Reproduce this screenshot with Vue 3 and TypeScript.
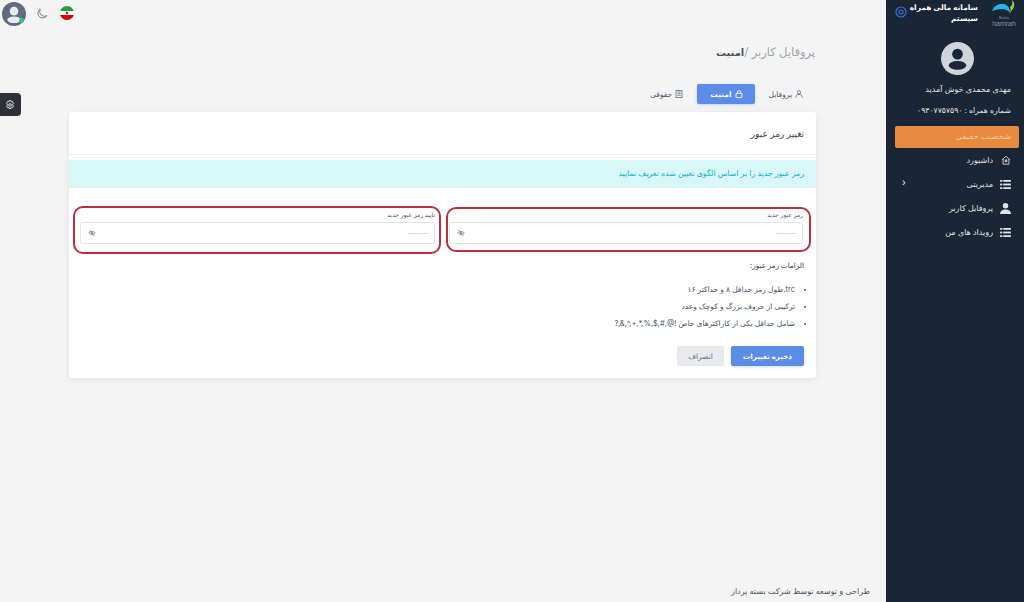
<script setup lang="ts">
const menu = [
  { label: 'داشبورد', icon: 'home' },
  { label: 'مدیریتی', icon: 'list', arrow: true },
  { label: 'پروفایل کاربر', icon: 'user' },
  { label: 'رویداد های من', icon: 'list' },
]
const rules = [
  'trc.طول رمز حداقل ۸ و حداکتر ۱۶',
  'ترکیبی از حروف بزرگ و کوچک وعدد',
  'شامل حداقل یکی از کاراکترهای خاص !@,#,$,%,*,+,^,&,?',
]
const fields = ['رمز عبور جدید', 'تایید رمز عبور جدید']
</script>

<template>
  <div class="page" dir="rtl">
    <aside class="sidebar">
      <div class="brand">
        <svg class="logo" viewBox="0 0 26 28" width="26" height="28">
          <path d="M1 11C3 6 8 3 13 4c4 1 6 4 6 9-2-3-5-4-8-4-4 0-7 1-10 2z" fill="#23b4ea" />
          <path d="M18 14c2-2 2-5 1-7 2-1 3-4 2-7 3 2 3 7 0 10-1 2-2 3-3 4z" fill="#a3c93a" />
          <text x="13" y="19" text-anchor="middle" class="logo-sub">Banka</text>
          <text x="13" y="26" text-anchor="middle" class="logo-text">hamrah</text>
        </svg>
        <div class="brand-name">سامانه مالی همراه<br />سیستم</div>
        <svg class="target" viewBox="0 0 12 12" width="12" height="12">
          <circle cx="6" cy="6" r="5" fill="none" stroke="#3d6fe0" stroke-width="1.2" />
          <circle cx="6" cy="6" r="2" fill="none" stroke="#3d6fe0" stroke-width="1.2" />
        </svg>
      </div>
      <div class="user">
        <svg class="side-avatar" viewBox="0 0 34 34" width="33" height="33">
          <circle cx="17" cy="17" r="17" fill="#ced4da" />
          <circle cx="17" cy="12.500" r="5.500" fill="#1a2535" />
          <ellipse cx="17" cy="24" rx="9" ry="4.500" fill="#1a2535" />
        </svg>
        <div class="welcome">مهدی محمدی خوش آمدید</div>
        <div class="phone">شماره همراه : ۰۹۳۰۷۷۵۷۵۹۰</div>
      </div>
      <div class="identity">شخصیت حقیقی</div>
      <nav class="menu">
        <div v-for="item in menu" :key="item.label" class="menu-item">
          <span class="menu-icon">
            <svg v-if="item.icon === 'home'" viewBox="0 0 12 12" width="10" height="10" fill="none" stroke="#dfe3e8" stroke-width="1">
              <path d="M1 6l5-4.500 5 4.500M2.500 5v6h7v-6" />
              <rect x="5" y="6" width="2" height="2" />
            </svg>
            <svg v-else-if="item.icon === 'list'" viewBox="0 0 12 10" width="11" height="9" fill="#dfe3e8">
              <rect x="0" y="0" width="2.500" height="2" /><rect x="3.500" y="0" width="8.500" height="2" />
              <rect x="0" y="4" width="2.500" height="2" /><rect x="3.500" y="4" width="8.500" height="2" />
              <rect x="0" y="8" width="2.500" height="2" /><rect x="3.500" y="8" width="8.500" height="2" />
            </svg>
            <svg v-else viewBox="0 0 12 12" width="11" height="11" fill="#dfe3e8">
              <circle cx="6" cy="3" r="3" />
              <path d="M0 12c0-3 2-5 6-5s6 2 6 5z" />
            </svg>
          </span>
          <span>{{ item.label }}</span>
          <span v-if="item.arrow" class="chev">‹</span>
        </div>
      </nav>
    </aside>

    <main class="main">
      <div class="topbar">
        <div class="avatar-wrap">
          <svg viewBox="0 0 25 25" width="24" height="24">
            <circle cx="12.500" cy="12.500" r="12.500" fill="#5f6b80" />
            <circle cx="12.500" cy="9.500" r="4.500" fill="#e9ecef" />
            <ellipse cx="12.500" cy="18.500" rx="7" ry="3.500" fill="#e9ecef" />
          </svg>
          <span class="online"></span>
        </div>
        <svg class="moon" viewBox="0 0 14 14" width="12" height="12" fill="none" stroke="#6b7280" stroke-width="1">
          <path d="M5 1.500a5.500 5.500 0 1 0 7.500 7.500 5.500 5.500 0 0 1-7.500-7.500z" />
        </svg>
        <svg class="flag" viewBox="0 0 14 14" width="14" height="14">
          <clipPath id="flag-c"><circle cx="7" cy="7" r="7" /></clipPath>
          <g clip-path="url(#flag-c)">
            <rect width="14" height="5" fill="#239f40" />
            <rect y="5" width="14" height="4" fill="#fff" />
            <rect y="9" width="14" height="5" fill="#da0000" />
            <circle cx="7" cy="7" r="1.200" fill="#da0000" />
          </g>
        </svg>
      </div>

      <div class="settings">
        <svg viewBox="0 0 12 12" width="10" height="10" fill="none" stroke="#e5e7eb" stroke-width="1.100">
          <path d="M4.800.8h2.400l.4 1.500 1.400-.5 1.200 2-1.100 1.100v1.200l1.100 1.100-1.200 2-1.400-.5-.4 1.500H4.800l-.4-1.500-1.400.5-1.200-2 1.100-1.100V4.900L1.800 3.800l1.200-2 1.400.5z" />
          <circle cx="6" cy="6" r="1.600" />
        </svg>
      </div>

      <div class="crumb">پروفایل کاربر /<b>امنیت</b></div>

      <div class="tabs">
        <div class="tab">
          <svg viewBox="0 0 12 12" width="8" height="8" fill="none" stroke="#4b5563" stroke-width="1">
            <circle cx="6" cy="3.500" r="2.500" /><path d="M1 11.500c0-3 2-5 5-5s5 2 5 5" />
          </svg>
          پروفایل
        </div>
        <div class="tab active">
          <svg viewBox="0 0 12 12" width="8" height="8" fill="none" stroke="#fff" stroke-width="1.400">
            <rect x="1.500" y="5" width="9" height="6.500" rx="1" /><path d="M3.500 5V3.500a2.500 2.500 0 0 1 5 0V5" />
          </svg>
          امنیت
        </div>
        <div class="tab">
          <svg viewBox="0 0 12 12" width="8" height="8" fill="none" stroke="#4b5563" stroke-width="1">
            <rect x="1.500" y=".5" width="9" height="11" /><path d="M3.500 3h5M3.500 5.500h5M3.500 8h5" />
          </svg>
          حقوقی
        </div>
      </div>

      <section class="card">
        <h4 class="card-title">تغییر رمز عبور</h4>
        <div class="alert">رمز عبور جدید را بر اساس الگوی تعیین شده تعریف نمایید</div>
        <div class="fields">
          <div v-for="f in fields" :key="f" class="field">
            <label>{{ f }}</label>
            <div class="input">
              <span class="dots">············</span>
              <svg viewBox="0 0 12 12" width="8" height="8" fill="none" stroke="#6b7280" stroke-width="1">
                <path d="M1 6c2-3 8-3 10 0-2 3-8 3-10 0z" /><circle cx="6" cy="6" r="1.500" /><path d="M2 1.500l8 9" />
              </svg>
            </div>
          </div>
        </div>
        <div class="rules-title">الزامات رمز عبور:</div>
        <ul class="rules">
          <li v-for="r in rules" :key="r">{{ r }}</li>
        </ul>
        <div class="actions">
          <button class="btn primary">ذخیره تغییرات</button>
          <button class="btn">انصراف</button>
        </div>
      </section>

      <footer class="footer">طراحی و توسعه توسط شرکت بسته پرداز</footer>
    </main>
  </div>
</template>

<style>
html, body { margin: 0; background: #f4f4f5; }
</style>

<style scoped>
.page { display: flex; width: 1024px; height: 602px; overflow: hidden; font-family: Inter, "DejaVu Sans", sans-serif; background: #f4f4f5; color: #4b5563; }
.sidebar { width: 138px; flex: none; background: #1a2535; color: #e5e7eb; display: flex; flex-direction: column; }
.brand { display: flex; align-items: flex-start; height: 38px; padding-right: 7px; box-sizing: border-box; }
.logo { flex: none; margin-left: 13px; }
.logo-text { font: 7px "Liberation Sans", sans-serif; fill: #8493a6; }
.logo-sub { font: 3.500px "Liberation Sans", sans-serif; fill: #8493a6; }
.brand-name { width: 64px; font-size: 7.500px; line-height: 11px; font-weight: 700; color: #fff; padding-top: 2px; white-space: nowrap; }
.target { margin: 6px 7px 0 0; flex: none; }
.user { display: flex; flex-direction: column; align-items: center; padding: 4px 0 0 4px; }
.welcome { align-self: flex-start; margin: 8px 13px 0 0; font-size: 8px; line-height: 12px; }
.phone { align-self: flex-start; margin: 10px 13px 0 0; font-size: 7.700px; line-height: 12px; white-space: nowrap; }
.identity { margin: 9px 5px 0 9px; height: 22px; line-height: 21px; background: #e58a3f; border-radius: 2px; color: #f6c9a0; font-size: 8.300px; padding-right: 8px; }
.menu { display: flex; flex-direction: column; }
.menu-item { height: 24px; display: flex; align-items: center; gap: 7px; padding-right: 13px; font-size: 8px; color: #e5e7eb; position: relative; }
.menu-icon { width: 11px; display: flex; justify-content: center; }
.chev { position: absolute; left: 16px; top: 4px; font-size: 10px; }
.main { flex: 1; position: relative; display: flex; flex-direction: column; min-width: 0; }
.topbar { position: absolute; left: 2px; top: 2px; display: flex; align-items: center; direction: ltr; }
.avatar-wrap { position: relative; height: 24px; }
.avatar-wrap svg { display: block; }
.moon { margin-left: 10px; }
.flag { margin-left: 12px; margin-top: -2px; }
.online { position: absolute; right: 2px; bottom: 3px; width: 5px; height: 5px; background: #34c38f; border-radius: 50%; }
.settings { position: absolute; left: 0; top: 93px; width: 21px; height: 23px; background: #2f3136; border-radius: 0 4px 4px 0; display: flex; align-items: center; justify-content: center; padding-right: 2px; box-sizing: border-box; }
.crumb { margin: 45px 71px 0 0; height: 14px; font-size: 11.500px; line-height: 14px; color: #a0a6ae; }
.crumb b { color: #4b5563; font-size: 10px; }
.tabs { display: flex; align-items: center; gap: 3px; margin: 25px 72px 0 0; height: 20px; }
.tab { display: flex; align-items: center; gap: 3px; padding: 0 11px; height: 20px; font-size: 7.500px; color: #4b5563; border-radius: 2px; }
.tab.active { background: #5b8de8; color: #fff; box-shadow: 0 1px 3px rgba(91, 141, 232, .3); padding: 0 12px 0 13px; font-weight: 700; }
.card { margin: 8px 70px 0 69px; height: 266px; background: #fff; border-radius: 3px; box-shadow: 0 2px 8px rgba(0, 0, 0, .07); box-sizing: border-box; display: flex; flex-direction: column; }
.card-title { margin: 0; height: 43px; line-height: 43px; padding-right: 12px; font-size: 9px; font-weight: 500; color: #374151; border-bottom: 1px solid #eceef1; box-sizing: border-box; }
.alert { margin-top: 5px; height: 28px; line-height: 26px; background: #d9f7f8; color: #15b3c2; font-size: 7.800px; padding-right: 12px; }
.fields { display: grid; grid-template-columns: 365px 368px; gap: 5px; align-items: start; margin: 18px 5px 0 4px; }
.field { border: 2px solid #bb2f3d; border-radius: 10px; box-sizing: border-box; display: flex; flex-direction: column; }
.field:nth-child(1) { height: 45px; margin-top: 1px; padding: 1px 6px 0 1px; }
.field:nth-child(2) { height: 48px; padding: 2px 4px 0 5px; }
.field label { font-size: 6px; line-height: 9px; color: #4b5563; }
.input { margin-top: 3px; height: 22px; border: 1px solid #e2e5e9; border-radius: 2px; display: flex; justify-content: space-between; align-items: center; padding: 0 6px 0 7px; box-sizing: border-box; }
.dots { color: #b5bac1; font-size: 8px; letter-spacing: -.6px; }
.rules-title { margin: 6px 12px 0 0; font-size: 7.200px; line-height: 12px; color: #374151; font-weight: 500; }
.rules { margin: 9px 0 0; padding: 0 21px 0 0; font-size: 7.500px; line-height: 17px; color: #4b5563; }
.actions { display: flex; gap: 7px; margin: 14px 12px 0 0; }
.btn { height: 20px; border: none; border-radius: 2px; background: #e8eaee; color: #6b7280; font-family: inherit; font-size: 7.500px; padding: 0; width: 47px; }
.btn.primary { background: #5b8de8; color: #fff; width: 73px; box-shadow: 0 1px 3px rgba(91, 141, 232, .3); font-weight: 700; font-size: 7.200px; }
.footer { margin-top: auto; padding: 0 16px 6px 0; font-size: 8px; line-height: 10px; color: #4b5563; }
</style>
